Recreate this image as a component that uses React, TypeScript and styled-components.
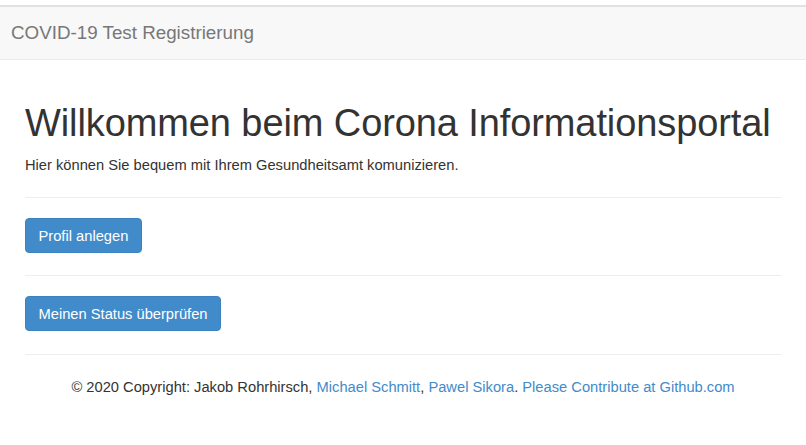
import React from "react";
import styled, { createGlobalStyle } from "styled-components";

const GlobalStyle = createGlobalStyle`
  html, body {
    margin: 0;
    padding: 0;
    background: #ffffff;
    font-family: "Liberation Sans", Arial, sans-serif;
    color: #333333;
  }
`;

const Page = styled.div`
  padding-top: 5px;
`;

const Navbar = styled.nav`
  height: 55px;
  background: #f8f8f8;
  border-top: 2px solid #e2e2e2;
  border-bottom: 1px solid #ececec;
  display: flex;
  align-items: center;
  box-sizing: border-box;
  padding-left: 11px;
`;

const Brand = styled.span`
  font-size: 18.8px;
  color: #777777;
`;

const Container = styled.main`
  padding: 41px 25px 0 25px;
  width: 756px;
`;

const Title = styled.h1`
  margin: 0;
  font-size: 38px;
  letter-spacing: -0.1px;
  font-weight: 400;
  line-height: 44px;
  white-space: nowrap;
  color: #333333;
`;

const Lead = styled.p`
  margin: 10px 0 0 0;
  font-size: 14.7px;
  line-height: 20px;
`;

const Rule = styled.hr<{ $top: number; $bottom: number }>`
  border: 0;
  border-top: 1px solid #eeeeee;
  margin: ${(p) => `${p.$top}px 0 ${p.$bottom}px 0`};
`;

const Button = styled.button`
  display: block;
  height: 35px;
  padding: 0 12.5px;
  background: #428bca;
  border: 1px solid #3c82c0;
  border-radius: 4px;
  color: #ffffff;
  font-family: "Liberation Sans", Arial, sans-serif;
  font-size: 14.7px;
  cursor: pointer;
`;

const Footer = styled.footer`
  text-align: center;
  font-size: 14.7px;
  line-height: 20px;
  color: #333333;
  margin-top: 22px;
`;

const Link = styled.a`
  color: #428bca;
  text-decoration: none;
`;

export default function App() {
  return (
    <Page>
      <GlobalStyle />
      <Navbar>
        <Brand>COVID-19 Test Registrierung</Brand>
      </Navbar>
      <Container>
        <Title>Willkommen beim Corona Informationsportal</Title>
        <Lead>Hier können Sie bequem mit Ihrem Gesundheitsamt komunizieren.</Lead>
        <Rule $top={22} $bottom={20} />
        <Button>Profil anlegen</Button>
        <Rule $top={22} $bottom={20} />
        <Button>Meinen Status überprüfen</Button>
        <Rule $top={23} $bottom={0} />
        <Footer>
          © 2020 Copyright: Jakob Rohrhirsch, <Link href="#">Michael Schmitt</Link>,{" "}
          <Link href="#">Pawel Sikora</Link>. <Link href="#">Please Contribute at Github.com</Link>
        </Footer>
      </Container>
    </Page>
  );
}
